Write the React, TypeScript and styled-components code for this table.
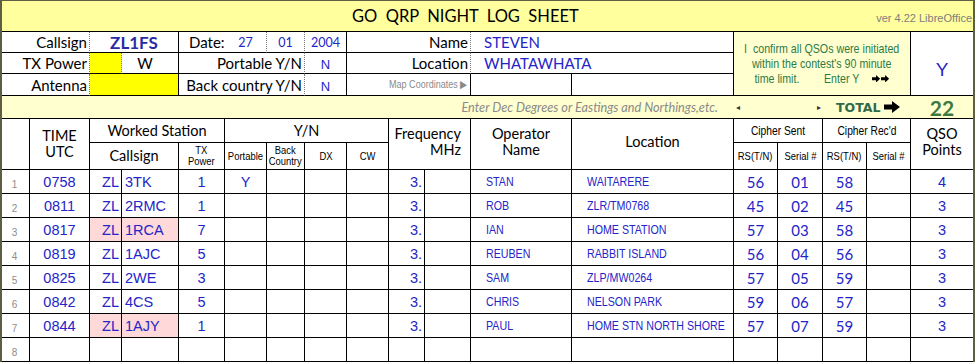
import styled, { createGlobalStyle } from 'styled-components'

const COLS = [28, 60, 32, 57, 46, 42, 38, 42, 42, 36, 46, 101, 162, 44, 45, 44, 44, 62]

const BLUE = '#2424c8'
const GREEN = '#2d7a46'

type Line = 'solid' | 'dotted' | 'none'

type QSO = {
  n: number
  time?: string
  call?: string
  tx?: string
  portable?: string
  op?: string
  loc?: string
  rs?: string
  serial?: string
  rsRcvd?: string
  points?: string
  flagged?: boolean
}

const qsos: QSO[] = [
  { n: 1, time: '0758', call: '3TK', tx: '1', portable: 'Y', op: 'STAN', loc: 'WAITARERE', rs: '56', serial: '01', rsRcvd: '58', points: '4' },
  { n: 2, time: '0811', call: '2RMC', tx: '1', op: 'ROB', loc: 'ZLR/TM0768', rs: '45', serial: '02', rsRcvd: '45', points: '3' },
  { n: 3, time: '0817', call: '1RCA', tx: '7', op: 'IAN', loc: 'HOME STATION', rs: '57', serial: '03', rsRcvd: '58', points: '3', flagged: true },
  { n: 4, time: '0819', call: '1AJC', tx: '5', op: 'REUBEN', loc: 'RABBIT ISLAND', rs: '56', serial: '04', rsRcvd: '56', points: '3' },
  { n: 5, time: '0825', call: '2WE', tx: '3', op: 'SAM', loc: 'ZLP/MW0264', rs: '57', serial: '05', rsRcvd: '59', points: '3' },
  { n: 6, time: '0842', call: '4CS', tx: '5', op: 'CHRIS', loc: 'NELSON PARK', rs: '59', serial: '06', rsRcvd: '57', points: '3' },
  { n: 7, time: '0844', call: '1AJY', tx: '1', op: 'PAUL', loc: 'HOME STN NORTH SHORE', rs: '57', serial: '07', rsRcvd: '59', points: '3', flagged: true },
  { n: 8 },
]

const GlobalStyle = createGlobalStyle`
  body {
    margin: 0;
    background: #fff;
  }
`

export default function App() {
  return (
    <>
      <GlobalStyle />
      <Sheet>
        {/* title */}
        <Cell $span={18} $line="none" $bg="#ffff9e" $pad="0">
          <TitleBar>
            <Title>{'GO  QRP  NIGHT  LOG  SHEET'}</Title>
            <Version>ver 4.22 LibreOffice</Version>
          </TitleBar>
        </Cell>

        {/* row 1 */}
        <Cell $span={2} $line="dotted" $align="right">
          <Label>Callsign</Label>
        </Cell>
        <Cell $span={2} $align="center">
          <BigCall>ZL1FS</BigCall>
        </Cell>
        <Cell $line="none" $pad="0 0 0 10px">
          <Label>Date:</Label>
        </Cell>
        <Cell $line="dotted" $align="center">
          <DateNum>27</DateNum>
        </Cell>
        <Cell $line="dotted" $align="center">
          <DateNum>01</DateNum>
        </Cell>
        <Cell $align="center">
          <DateNum>2004</DateNum>
        </Cell>
        <Cell $span={3} $line="dotted" $align="right">
          <Label>Name</Label>
        </Cell>
        <Cell $span={2} $pad="0 0 0 13px">
          <Entry>STEVEN</Entry>
        </Cell>
        <Cell $span={4} $rows={3} $bg="#ffffd0" $align="center" $pad="0">
          <Notice>
            <NoticeLine>{'I  confirm all QSOs were initiated'}</NoticeLine>
            <NoticeLine>{"within the contest's 90 minute"}</NoticeLine>
            <NoticeLine>
              time limit.
              <Gap $w={30} />
              Enter Y
              <Gap $w={14} />
              <Arrow $w={10} />
              <Arrow $w={10} />
            </NoticeLine>
          </Notice>
        </Cell>
        <Cell $rows={3} $line="none" $align="center" $pad="12px 0 0">
          <BigY>Y</BigY>
        </Cell>

        {/* row 2 */}
        <Cell $span={2} $line="dotted" $align="right">
          <Label>TX Power</Label>
        </Cell>
        <Cell $line="dotted" $bg="#ffff00" />
        <Cell $align="center" $pad="0 10px 0 0">
          <Label>W</Label>
        </Cell>
        <Cell $span={3} $line="dotted" $align="right">
          <Label>Portable Y/N</Label>
        </Cell>
        <Cell $align="center">
          <YN>N</YN>
        </Cell>
        <Cell $span={3} $line="dotted" $align="right">
          <Label>Location</Label>
        </Cell>
        <Cell $span={2} $pad="0 0 0 13px">
          <Entry>WHATAWHATA</Entry>
        </Cell>

        {/* row 3 */}
        <Cell $span={2} $line="dotted" $align="right">
          <Label>Antenna</Label>
        </Cell>
        <Cell $span={2} $bg="#ffff00" />
        <Cell $span={3} $line="dotted" $align="right">
          <Label>Back country Y/N</Label>
        </Cell>
        <Cell $align="center">
          <YN>N</YN>
        </Cell>
        <Cell $span={3} $align="right" $pad="0 3px 0 0">
          <Hint>Map Coordinates ▶</Hint>
        </Cell>
        <Cell />
        <Cell />

        {/* row 4 */}
        <Cell $span={13} $line="none" $bg="#ffffd0" $align="right" $pad="0 16px 0 0">
          <Prompt>Enter Dec Degrees or Eastings and Northings,etc.</Prompt>
        </Cell>
        <Cell $span={2} $line="none" $bg="#ffffd0" $align="between" $pad="0 2px">
          <Nudge>◂</Nudge>
          <Nudge>▸</Nudge>
        </Cell>
        <Cell $span={2} $line="none" $bg="#ffffd0" $pad="0 0 0 13px">
          <TotalLabel>TOTAL</TotalLabel>
          <Arrow $w={16} />
        </Cell>
        <Cell $line="none" $bg="#ffffd0" $align="center">
          <TotalValue>22</TotalValue>
        </Cell>

        {/* column headings */}
        <Cell $rows={2} />
        <Cell $rows={2} $align="center">
          <HeadText>
            TIME
            <br />
            UTC
          </HeadText>
        </Cell>
        <Cell $span={3} $align="center">
          <HeadText>Worked Station</HeadText>
        </Cell>
        <Cell $span={4} $align="center">
          <HeadText>Y/N</HeadText>
        </Cell>
        <Cell $span={2} $rows={2} $align="right" $pad="0 9px 4px 0">
          <HeadText $align="right">
            Frequency
            <br />
            MHz
          </HeadText>
        </Cell>
        <Cell $rows={2} $align="center" $pad="0 0 4px">
          <HeadText>
            Operator
            <br />
            Name
          </HeadText>
        </Cell>
        <Cell $rows={2} $align="center" $pad="0 0 4px">
          <HeadText>Location</HeadText>
        </Cell>
        <Cell $span={2} $align="center">
          <SubHead>Cipher Sent</SubHead>
        </Cell>
        <Cell $span={2} $align="center">
          <SubHead>Cipher Rec'd</SubHead>
        </Cell>
        <Cell $rows={2} $line="none" $align="center" $pad="0 0 4px">
          <HeadText>
            QSO
            <br />
            Points
          </HeadText>
        </Cell>

        <Cell $span={2} $align="center">
          <HeadText>Callsign</HeadText>
        </Cell>
        <Cell $align="center" $pad="0">
          <TinyHead>
            TX
            <br />
            Power
          </TinyHead>
        </Cell>
        <Cell $align="center" $pad="0">
          <TinyHead>Portable</TinyHead>
        </Cell>
        <Cell $align="center" $pad="0">
          <TinyHead>
            Back
            <br />
            Country
          </TinyHead>
        </Cell>
        <Cell $align="center">
          <TinyHead>DX</TinyHead>
        </Cell>
        <Cell $align="center">
          <TinyHead>CW</TinyHead>
        </Cell>
        <Cell $align="center" $pad="0">
          <TinyHead>RS(T/N)</TinyHead>
        </Cell>
        <Cell $align="center" $pad="0">
          <TinyHead>Serial #</TinyHead>
        </Cell>
        <Cell $align="center" $pad="0">
          <TinyHead>RS(T/N)</TinyHead>
        </Cell>
        <Cell $align="center" $pad="0">
          <TinyHead>Serial #</TinyHead>
        </Cell>

        {/* log rows */}
        {qsos.map((q) => {
          const pink = q.flagged ? '#ffd9d9' : undefined
          return [
            <Cell key={`n${q.n}`} $align="center" $valign="end" $pad="0 2px 3px 0">
              <RowNum>{q.n}</RowNum>
            </Cell>,
            <Cell key={`t${q.n}`} $align="center">
              <DataText>{q.time}</DataText>
            </Cell>,
            <Cell key={`z${q.n}`} $align="right" $bg={pink} $pad="0 2px 0 0">
              <DataText>{q.time ? 'ZL' : ''}</DataText>
            </Cell>,
            <Cell key={`c${q.n}`} $bg={pink} $pad="0 0 0 3px">
              <DataText>{q.call}</DataText>
            </Cell>,
            <Cell key={`x${q.n}`} $align="center">
              <DataText>{q.tx}</DataText>
            </Cell>,
            <Cell key={`p${q.n}`} $align="center">
              <DataText>{q.portable}</DataText>
            </Cell>,
            <Cell key={`b${q.n}`} />,
            <Cell key={`d${q.n}`} />,
            <Cell key={`w${q.n}`} />,
            <Cell key={`f${q.n}`} $align="right" $pad="0 2px 0 0">
              <DataText>{q.time ? '3.' : ''}</DataText>
            </Cell>,
            <Cell key={`g${q.n}`} />,
            <Cell key={`o${q.n}`} $pad="0 0 0 15px">
              <NarrowText>{q.op}</NarrowText>
            </Cell>,
            <Cell key={`l${q.n}`} $pad="0 0 0 15px">
              <NarrowText>{q.loc}</NarrowText>
            </Cell>,
            <Cell key={`r${q.n}`} $align="center">
              <CipherNum>{q.rs}</CipherNum>
            </Cell>,
            <Cell key={`s${q.n}`} $align="center">
              <CipherNum>{q.serial}</CipherNum>
            </Cell>,
            <Cell key={`q${q.n}`} $align="center">
              <CipherNum>{q.rsRcvd}</CipherNum>
            </Cell>,
            <Cell key={`e${q.n}`} />,
            <Cell key={`k${q.n}`} $line="none" $align="center">
              <DataText>{q.points}</DataText>
            </Cell>,
          ]
        })}
      </Sheet>
    </>
  )
}

function Arrow({ $w }: { $w: number }) {
  return (
    <ArrowSvg width={$w} height={$w * 0.75} viewBox="0 0 16 12">
      <path d="M0 3.5 H8 V0 L16 6 L8 12 V8.5 H0 Z" fill="#000" />
    </ArrowSvg>
  )
}

const Sheet = styled.div`
  display: grid;
  grid-template-columns: ${COLS.map((c) => `${c}px`).join(' ')};
  grid-template-rows: 31px 21px 21px 22px 23px 24px 27px repeat(8, 24px);
  width: 975px;
  box-sizing: border-box;
  border-left: 2px solid #5e5e44;
  border-right: 2px solid #5e5e44;
  border-top: 1px solid #5e5e44;
  font-family: Lato, 'Open Sans', sans-serif;
  color: #000;
`

type CellProps = {
  $span?: number
  $rows?: number
  $line?: Line
  $bg?: string
  $align?: 'left' | 'center' | 'right' | 'between'
  $valign?: 'center' | 'end'
  $pad?: string
}

const justify = {
  left: 'flex-start',
  center: 'center',
  right: 'flex-end',
  between: 'space-between',
}

const Cell = styled.div<CellProps>`
  grid-column: span ${(p) => p.$span ?? 1};
  grid-row: span ${(p) => p.$rows ?? 1};
  box-sizing: border-box;
  min-width: 0;
  display: flex;
  align-items: ${(p) => (p.$valign === 'end' ? 'flex-end' : 'center')};
  justify-content: ${(p) => justify[p.$align ?? 'left']};
  padding: ${(p) => p.$pad ?? '0 2px'};
  background: ${(p) => p.$bg ?? 'transparent'};
  border-bottom: 1px solid #000;
  border-right: ${(p) =>
    p.$line === 'none' ? 'none' : p.$line === 'dotted' ? '1px dotted #7a7a7a' : '1px solid #000'};
  white-space: nowrap;
  overflow: hidden;
`

const TitleBar = styled.div`
  display: flex;
  align-items: center;
  width: 100%;
  height: 100%;
`

const Title = styled.span`
  margin-left: 350px;
  font-size: 16.5px;
  white-space: pre;
`

const Version = styled.span`
  margin-left: auto;
  margin-right: 1px;
  margin-top: 4px;
  font-family: 'Liberation Sans', Arial, sans-serif;
  font-size: 11px;
  color: #7d7d7d;
`

const Label = styled.span`
  font-size: 15px;
`

const BigCall = styled.span`
  font-size: 17px;
  font-weight: 700;
  color: #2a2aa6;
`

const DateNum = styled.span`
  font-size: 12.5px;
  color: ${BLUE};
`

const Entry = styled.span`
  font-size: 15px;
  color: ${BLUE};
`

const YN = styled.span`
  font-family: 'Liberation Sans', Arial, sans-serif;
  font-size: 13px;
  color: ${BLUE};
  margin-top: 3px;
`

const BigY = styled.span`
  font-family: 'Liberation Sans', Arial, sans-serif;
  font-size: 19px;
  color: ${BLUE};
`

/* the sheet's narrow face is Arial Narrow: squeeze Liberation Sans to match */
const Narrow = styled.span`
  display: inline-block;
  font-family: 'Liberation Sans', Arial, sans-serif;
  transform: scaleX(0.82);
`

const Hint = styled(Narrow)`
  font-size: 11px;
  color: #8a8a8a;
  transform-origin: right center;
`

const Notice = styled.div`
  display: flex;
  flex-direction: column;
  align-items: center;
  font-family: 'Liberation Sans', Arial, sans-serif;
  font-size: 13px;
  line-height: 15px;
  color: ${GREEN};
  white-space: pre;
  transform: scaleX(0.82);
`

const NoticeLine = styled.span`
  display: flex;
  align-items: center;
`

const Gap = styled.span<{ $w: number }>`
  display: inline-block;
  width: ${(p) => p.$w}px;
`

const ArrowSvg = styled.svg`
  display: inline-block;
  margin-left: 1px;
`

const Prompt = styled.span`
  font-size: 12.7px;
  font-style: italic;
  color: #8a8a8a;
`

const Nudge = styled.span`
  font-family: 'DejaVu Sans', sans-serif;
  font-size: 8px;
  color: #333;
`

const TotalLabel = styled.span`
  font-family: 'DejaVu Sans', Verdana, sans-serif;
  font-size: 12.5px;
  font-weight: 700;
  color: #2f6b4a;
  margin-right: 3px;
`

const TotalValue = styled.span`
  font-size: 21px;
  font-weight: 700;
  color: #3c7a42;
`

const HeadText = styled.span<{ $align?: 'center' | 'right' }>`
  display: block;
  font-size: 14.5px;
  line-height: 16px;
  text-align: ${(p) => p.$align ?? 'center'};
`

const SubHead = styled(Narrow)`
  font-size: 12.5px;
`

const TinyHead = styled(Narrow)`
  font-size: 11.5px;
  line-height: 11px;
  text-align: center;
`

const RowNum = styled.span`
  font-family: 'Liberation Sans', Arial, sans-serif;
  font-size: 10px;
  color: #8c8c8c;
`

const DataText = styled.span`
  font-family: 'Liberation Sans', Arial, sans-serif;
  font-size: 14.5px;
  color: ${BLUE};
`

const NarrowText = styled(Narrow)`
  font-size: 13px;
  color: ${BLUE};
  transform-origin: left center;
`

const CipherNum = styled.span`
  font-size: 15px;
  color: ${BLUE};
`
